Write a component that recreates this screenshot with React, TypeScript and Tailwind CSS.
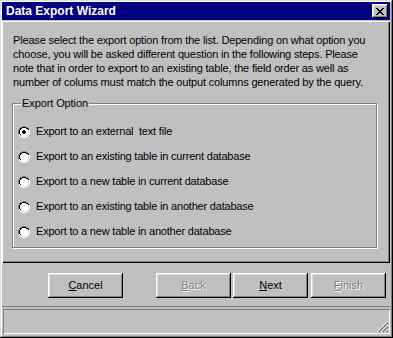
import React from "react";

const font = { fontFamily: '"Liberation Sans", Arial, sans-serif' };

function Radio({ checked }: { checked?: boolean }) {
  return (
    <svg width="12" height="12" viewBox="0 0 12 12" className="shrink-0" shapeRendering="crispEdges">
      <path d="M4 0h4v1H4zM2 1h2v1H2zM8 1h2v1H8zM1 2h1v2H1zM0 4h1v4H0z" fill="#808080" />
      <path d="M10 2h1v2h-1z" fill="#808080" />
      <path d="M4 1h4v1H4zM2 2h2v1H2zM8 2h2v1H8zM2 3h1v1H2zM1 4h1v4H1zM2 8h1v1H2z" fill="#000" />
      <path d="M10 3h1v1h-1z" fill="#000" />
      <path d="M11 4h1v4h-1zM10 8h1v2h-1zM8 10h2v1H8zM4 11h4v1H4zM2 10h2v1H2zM1 8h1v2H1z" fill="#fff" />
      <path d="M10 4h1v4h-1zM9 8h1v1H9zM8 9h2v1H8zM4 10h4v1H4zM2 9h2v1H2z" fill="#dfdfdf" />
      <path d="M4 2h4v1H4zM3 3h6v1H3zM2 4h8v4H2zM3 8h6v1H3zM4 9h4v1H4z" fill="#fff" />
      {checked && <path d="M5 4h2v1H5zM4 5h4v2H4zM5 7h2v1H5z" fill="#000" />}
    </svg>
  );
}

function Btn({ children, disabled }: { children: React.ReactNode; disabled?: boolean }) {
  return (
    <div
      className={`w-[75px] h-[25px] flex items-center justify-center text-[11px] bg-[#c0c0c0] shadow-[inset_-1px_-1px_#000,inset_1px_1px_#fff,inset_-2px_-2px_#808080,inset_2px_2px_#dfdfdf] ${
        disabled ? "text-[#808080] [text-shadow:1px_1px_#fff]" : "text-black"
      }`}
    >
      {children}
    </div>
  );
}

export default function App() {
  const options = [
    "Export to an external\u00a0 text file",
    "Export to an existing table in current database",
    "Export to a new table in current database",
    "Export to an existing table in another database",
    "Export to a new table in another database",
  ];
  return (
    <div
      style={font}
      className="w-[393px] h-[338px] bg-[#c0c0c0] flex flex-col pt-[2px] pl-[2px] pr-[3px] pb-[2px] shadow-[inset_-1px_-1px_#000,inset_1px_1px_#dfdfdf,inset_-2px_-2px_#808080,inset_2px_2px_#fff]"
    >
      {/* title bar */}
      <div className="h-[18px] bg-[#000080] flex items-center justify-between pl-[4px] pr-[2px] shrink-0">
        <span className="text-white font-bold text-[12px] leading-none">Data Export Wizard</span>
        <div className="w-[16px] h-[14px] bg-[#c0c0c0] flex items-center justify-center shadow-[inset_-1px_-1px_#000,inset_1px_1px_#fff,inset_-2px_-2px_#808080,inset_2px_2px_#dfdfdf]">
          <svg width="8" height="7" viewBox="0 0 8 7" shapeRendering="crispEdges">
            <path d="M0 0h2v1H0zM6 0h2v1H6zM1 1h2v1H1zM5 1h2v1H5zM2 2h4v1H2zM3 3h2v1H3zM2 4h4v1H2zM1 5h2v1H1zM5 5h2v1H5zM0 6h2v1H0zM6 6h2v1H6z" fill="#000" />
          </svg>
        </div>
      </div>

      {/* main panel */}
      <div className="mt-[1px] h-[242px] shrink-0 flex flex-col pt-[12px] pl-[10px] pr-[13px] shadow-[inset_1px_1px_#fff,inset_-1px_-1px_#000,inset_-2px_-2px_#808080]">
        <p className="text-[11px] leading-[14px] tracking-[-0.17px] text-black pl-[1px] whitespace-nowrap">
          Please select the export option from the list. Depending on what option you
          <br />
          choose, you will be asked different question in the following steps. Please
          <br />
          note that in order to export to an existing table, the field order as well as
          <br />
          number of colums must match the output columns generated by the query.
        </p>
        <div className="relative mt-[14px] h-[145px] border border-[#808080] shadow-[inset_1px_1px_#fff,1px_1px_#fff] pt-[15px] pl-[5px]">
          <span className="absolute left-[8px] top-[-8px] bg-[#c0c0c0] px-[1px] text-[11px] leading-[14px] tracking-[-0.1px] text-black">
            Export Option
          </span>
          {options.map((o, i) => (
            <div key={i} className="h-[25px] flex items-center gap-[6px]">
              <Radio checked={i === 0} />
              <span className="text-[11px] tracking-[-0.2px] text-black whitespace-pre">{o}</span>
            </div>
          ))}
        </div>
      </div>

      {/* buttons area */}
      <div className="h-[44px] shrink-0 flex items-start pt-[10px] pl-[46px] shadow-[inset_0_-1px_#808080]">
        <Btn>
          <span>
            <u>C</u>ancel
          </span>
        </Btn>
        <div className="w-[33px]" />
        <Btn disabled>
          <span>
            <u>B</u>ack
          </span>
        </Btn>
        <div className="w-[2px]" />
        <Btn>
          <span>
            <u>N</u>ext
          </span>
        </Btn>
        <div className="w-[3px]" />
        <Btn disabled>
          <span>
            <u>F</u>inish
          </span>
        </Btn>
      </div>

      {/* status bar */}
      <div className="flex-1 pt-[2px] pl-[1px] pb-[1px]">
        <div className="relative h-[25px] shadow-[inset_1px_1px_#808080,inset_-1px_-1px_#fff]">
          <svg
            className="absolute right-[1px] bottom-[1px]"
            width="12"
            height="12"
            viewBox="0 0 12 12"
            shapeRendering="crispEdges"
          >
            <path d="M11 0L0 11M11 4L4 11M11 8L8 11" stroke="#fff" strokeWidth="1" />
            <path d="M11 1L1 11M11 2L2 11M11 5L5 11M11 6L6 11M11 9L9 11M11 10L10 11" stroke="#808080" strokeWidth="1" />
          </svg>
        </div>
      </div>
    </div>
  );
}
